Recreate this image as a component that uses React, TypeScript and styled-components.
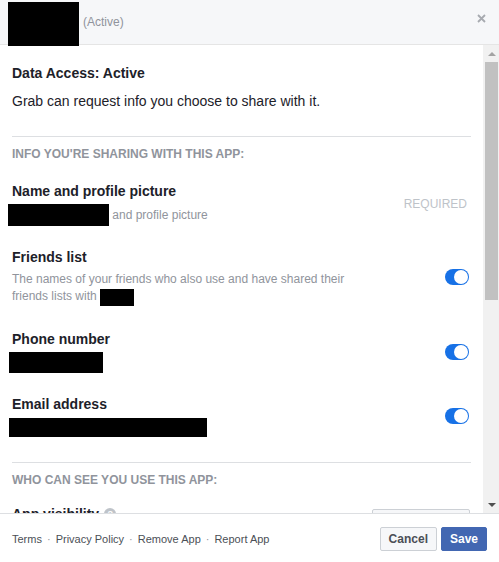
import * as React from "react";
import styled, { createGlobalStyle } from "styled-components";

const GlobalStyle = createGlobalStyle`
  html,
  body {
    margin: 0;
    padding: 0;
    background: #fff;
  }

  body {
    font-family: "Liberation Sans", Arial, Helvetica, sans-serif;
    color: #1d2129;
  }

  * {
    box-sizing: border-box;
  }
`;

const Dialog = styled.div`
  display: flex;
  flex-direction: column;
  width: 499px;
  height: 100vh;
  background: #fff;
  overflow: hidden;
`;

const Header = styled.div`
  display: flex;
  align-items: center;
  flex: none;
  height: 45px;
  padding: 0 13px 0 8px;
  background: #f6f7f9;
  border-bottom: 1px solid #e5e5e5;
`;

const Redact = styled.span<{ $w: number; $h: number; $ml?: number }>`
  display: inline-block;
  flex: none;
  width: ${p => p.$w}px;
  height: ${p => p.$h}px;
  margin-left: ${p => p.$ml || 0}px;
  background: #000;
`;

const HeaderRedact = styled(Redact)`
  align-self: flex-start;
  margin-top: 2px;
  position: relative;
  z-index: 1;
`;

const AppStatus = styled.span`
  flex: 1;
  margin-left: 4px;
  font-size: 12px;
  color: #90949c;
`;

const CloseButton = styled.button`
  display: flex;
  align-self: flex-start;
  margin-top: 14px;
  padding: 0;
  border: none;
  background: none;
  cursor: pointer;
`;

const Body = styled.div`
  display: flex;
  flex: 1;
  min-height: 0;
`;

const Scroll = styled.div`
  flex: 1;
  min-width: 0;
  overflow-y: auto;
  scrollbar-width: none;
  padding: 0 12px;
`;

/* the page is photographed without native scrollbars, so draw one */
const ScrollBar = styled.div`
  display: flex;
  flex-direction: column;
  flex: none;
  width: 16px;
  background: #f1f1f1;
`;

const ScrollButton = styled.div`
  display: flex;
  align-items: center;
  justify-content: center;
  flex: none;
  height: 17px;
  padding-left: 1px;
`;

const Arrow = styled.span<{ $down?: boolean; $color: string }>`
  width: 0;
  height: 0;
  border-left: 4px solid transparent;
  border-right: 4px solid transparent;
  ${p =>
    p.$down
      ? `border-top: 4px solid ${p.$color};`
      : `border-bottom: 4px solid ${p.$color};`}
`;

const Track = styled.div`
  flex: 1;
  padding: 0 1px 0 2px;
`;

const Thumb = styled.div<{ $size: number }>`
  height: ${p => p.$size}px;
  background: #c1c1c1;
`;

const Intro = styled.div`
  padding: 19px 0 26px;
`;

const Title = styled.div`
  font-size: 14px;
  font-weight: bold;
  line-height: 18px;
  color: #1d2129;
`;

const Lead = styled.div`
  margin-top: 10px;
  font-size: 14px;
  line-height: 18px;
  color: #1d2129;
`;

const Divider = styled.div`
  height: 1px;
  background: #dddfe2;
`;

const Section = styled.div<{ $bottom?: number }>`
  padding: 9px 0 ${p => p.$bottom || 24}px;
`;

const SectionLabel = styled.div`
  font-size: 12px;
  font-weight: bold;
  line-height: 16px;
  color: #90949c;
`;

const PermissionList = styled.div`
  display: flex;
  flex-direction: column;
  gap: 22px;
  margin-top: 20px;
`;

const PermissionRow = styled.div<{ $extra?: number }>`
  display: flex;
  align-items: center;
  justify-content: space-between;
  gap: 16px;
  padding-bottom: ${p => p.$extra || 0}px;
`;

const PermissionInfo = styled.div`
  max-width: 350px;
`;

const Detail = styled.div<{ $mt: number }>`
  display: flex;
  align-items: center;
  margin-top: ${p => p.$mt}px;
  font-size: 12px;
  line-height: 17px;
  color: #90949c;
`;

const DetailText = styled.div`
  margin-top: 5px;
  font-size: 12px;
  line-height: 17px;
  color: #90949c;
`;

const InlineRedact = styled(Redact)`
  vertical-align: -6px;
`;

const Required = styled.span`
  margin-right: 4px;
  font-size: 12px;
  color: #bec3c9;
`;

const Toggle = styled.span<{ $on: boolean }>`
  display: flex;
  align-items: center;
  justify-content: ${p => (p.$on ? "flex-end" : "flex-start")};
  flex: none;
  width: 24px;
  height: 16px;
  margin-right: 2px;
  padding: 1px;
  border-radius: 8px;
  background: ${p => (p.$on ? "#1771e6" : "#ccd0d5")};
`;

const Knob = styled.span`
  width: 14px;
  height: 14px;
  border-radius: 50%;
  background: #fff;
`;

const SettingRow = styled.div`
  display: flex;
  align-items: flex-start;
  justify-content: space-between;
  margin-top: 17px;
`;

const SettingTitle = styled(Title)`
  display: flex;
  align-items: center;
  gap: 5px;
`;

const HelpIcon = styled.span`
  display: inline-flex;
  align-items: center;
  justify-content: center;
  width: 12px;
  height: 12px;
  border-radius: 50%;
  background: #bec3c9;
  color: #fff;
  font-size: 9px;
  font-weight: bold;
`;

const Select = styled.button`
  display: flex;
  align-items: center;
  justify-content: space-between;
  width: 98px;
  height: 24px;
  margin: 4px 1px 0 0;
  padding: 0 8px;
  border: 1px solid #ccd0d5;
  border-radius: 2px;
  background: #f6f7f9;
  color: #4b4f56;
  font: bold 12px "Liberation Sans", Arial, sans-serif;
`;

const Hint = styled.div`
  margin-top: 6px;
  max-width: 350px;
  font-size: 12px;
  line-height: 17px;
  color: #90949c;
`;

const Footer = styled.div`
  display: flex;
  align-items: center;
  justify-content: space-between;
  flex: none;
  height: 49px;
  padding: 2px 12px 0;
  border-top: 1px solid #dddfe2;
  background: #fff;
`;

const FooterLinks = styled.div`
  display: flex;
  align-items: center;
  gap: 5px;
  font-size: 11px;
  line-height: 14px;
  color: #4b4f56;
`;

const FooterLink = styled.a`
  color: #4b4f56;
  text-decoration: none;
`;

const Dot = styled.span`
  color: #90949c;
`;

const Buttons = styled.div`
  display: flex;
  gap: 4px;
`;

const Button = styled.button<{ $primary?: boolean }>`
  height: 24px;
  padding: 0 8px;
  border: 1px solid ${p => (p.$primary ? "#4267b2" : "#ccd0d5")};
  border-radius: 2px;
  background: ${p => (p.$primary ? "#4267b2" : "#f6f7f9")};
  color: ${p => (p.$primary ? "#fff" : "#4b4f56")};
  font: bold 12px/22px "Liberation Sans", Arial, sans-serif;
  cursor: pointer;
`;

const CloseIcon = () => (
  <svg width="9" height="9" viewBox="0 0 9 9">
    <path d="M1 1L8 8M8 1L1 8" stroke="#a7aab0" strokeWidth="1.8" />
  </svg>
);

const Switch = ({ on }: { on: boolean }) => (
  <Toggle $on={on}>
    <Knob />
  </Toggle>
);

const FakeScrollBar = ({ thumb }: { thumb: number }) => (
  <ScrollBar>
    <ScrollButton>
      <Arrow $color="#a3a3a3" />
    </ScrollButton>
    <Track>
      <Thumb $size={thumb} />
    </Track>
    <ScrollButton>
      <Arrow $down $color="#505050" />
    </ScrollButton>
  </ScrollBar>
);

const footerLinks = ["Terms", "Privacy Policy", "Remove App", "Report App"];

const App = () => (
  <>
    <GlobalStyle />
    <Dialog>
      <Header>
        <HeaderRedact $w={71} $h={44} />
        <AppStatus>(Active)</AppStatus>
        <CloseButton aria-label="Close">
          <CloseIcon />
        </CloseButton>
      </Header>

      <Body>
        <Scroll>
          <Intro>
            <Title>Data Access: Active</Title>
            <Lead>Grab can request info you choose to share with it.</Lead>
          </Intro>
          <Divider />

          <Section $bottom={25}>
            <SectionLabel>INFO YOU'RE SHARING WITH THIS APP:</SectionLabel>
            <PermissionList>
              <PermissionRow>
                <PermissionInfo>
                  <Title>Name and profile picture</Title>
                  <Detail $mt={4}>
                    <Redact $w={101} $h={22} $ml={-4} />
                    &nbsp;and profile picture
                  </Detail>
                </PermissionInfo>
                <Required>REQUIRED</Required>
              </PermissionRow>

              <PermissionRow $extra={2}>
                <PermissionInfo>
                  <Title>Friends list</Title>
                  <DetailText>
                    The names of your friends who also use and have shared their friends lists with{" "}
                    <InlineRedact $w={34} $h={17} />
                  </DetailText>
                </PermissionInfo>
                <Switch on />
              </PermissionRow>

              <PermissionRow>
                <PermissionInfo>
                  <Title>Phone number</Title>
                  <Detail $mt={4}>
                    <Redact $w={94} $h={21} $ml={-3} />
                  </Detail>
                </PermissionInfo>
                <Switch on />
              </PermissionRow>

              <PermissionRow>
                <PermissionInfo>
                  <Title>Email address</Title>
                  <Detail $mt={5}>
                    <Redact $w={198} $h={19} $ml={-3} />
                  </Detail>
                </PermissionInfo>
                <Switch on />
              </PermissionRow>
            </PermissionList>
          </Section>
          <Divider />

          <Section>
            <SectionLabel>WHO CAN SEE YOU USE THIS APP:</SectionLabel>
            <SettingRow>
              <SettingTitle>
                App visibility <HelpIcon>?</HelpIcon>
              </SettingTitle>
              <Select>
                Only me <span>▾</span>
              </Select>
            </SettingRow>
            <Hint>Only you can see that you use this app on Facebook. This won't change what the app can see.</Hint>
          </Section>
          <Divider />

          <Section>
            <SectionLabel>NOTIFICATIONS:</SectionLabel>
            <SettingRow>
              <PermissionInfo>
                <Title>Allow notifications</Title>
                <Hint>Grab can send you notifications on Facebook.</Hint>
              </PermissionInfo>
              <Switch on />
            </SettingRow>
          </Section>
        </Scroll>
        <FakeScrollBar thumb={238} />
      </Body>

      <Footer>
        <FooterLinks>
          {footerLinks.map((label, i) => (
            <React.Fragment key={label}>
              {i > 0 && <Dot>·</Dot>}
              <FooterLink href="#">{label}</FooterLink>
            </React.Fragment>
          ))}
        </FooterLinks>
        <Buttons>
          <Button>Cancel</Button>
          <Button $primary>Save</Button>
        </Buttons>
      </Footer>
    </Dialog>
  </>
);

export default App;
